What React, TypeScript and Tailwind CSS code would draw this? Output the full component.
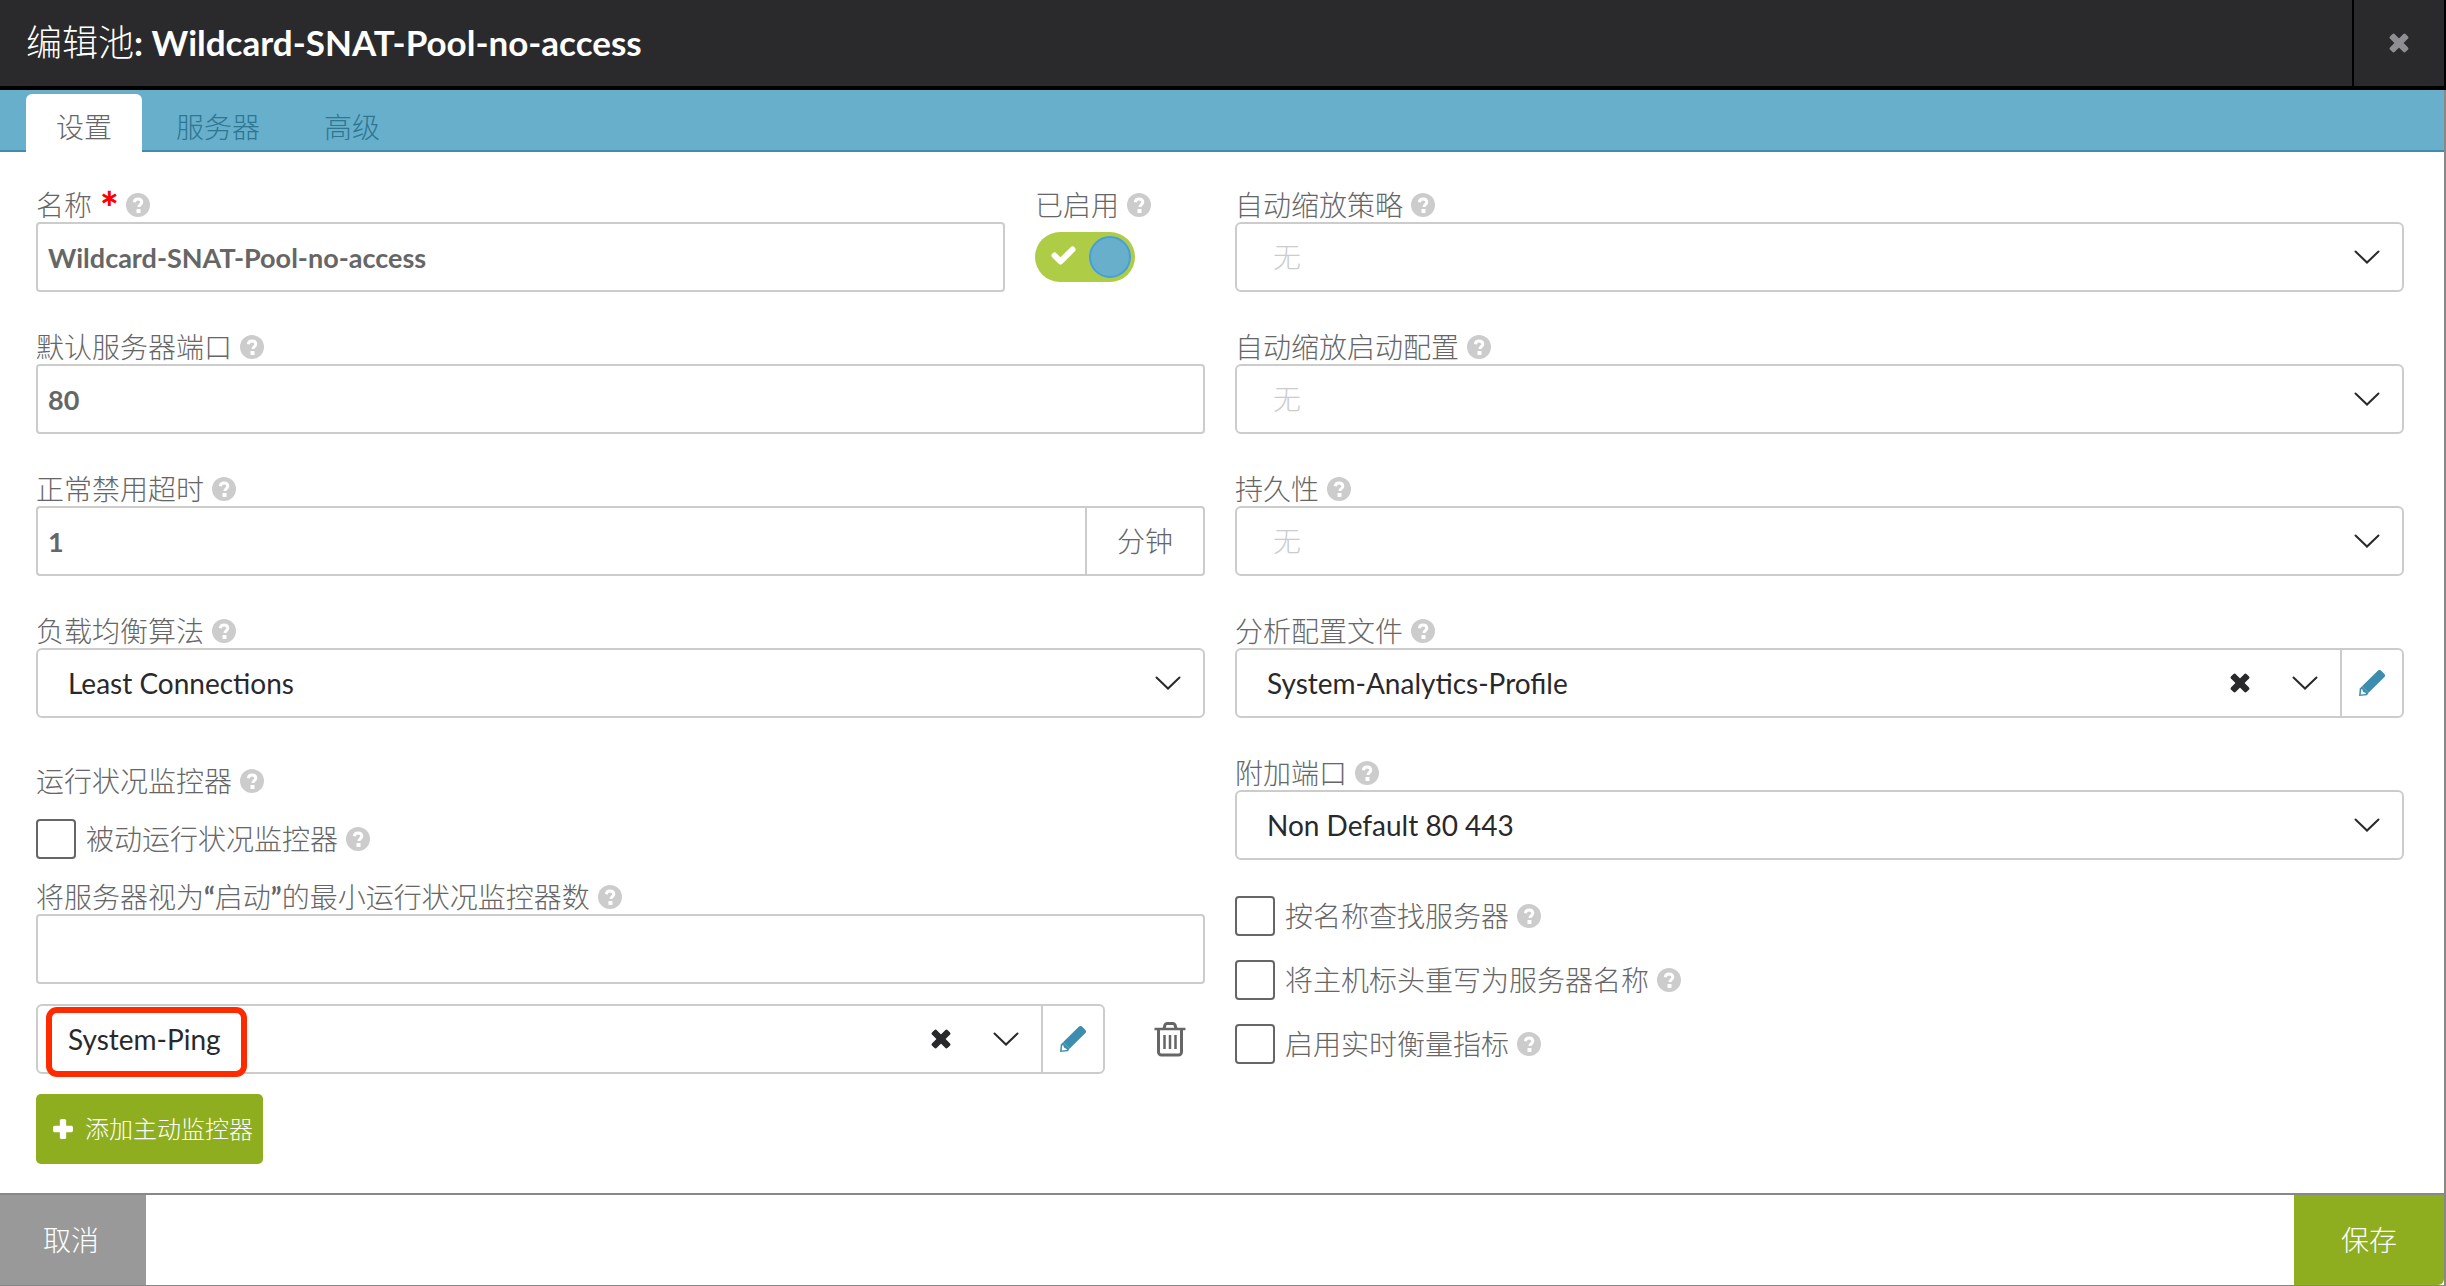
import type { ComponentProps, ReactNode } from 'react'
import clsx from 'clsx'

interface LabelProps {
  htmlFor?: string
  required?: boolean
  children: ReactNode
}

interface FieldProps extends LabelProps {
  control: ReactNode
  className?: string
}

interface DropdownProps {
  id: string
  value: string
  empty?: boolean
  editable?: boolean
  label?: string
  highlight?: boolean
}

const HelpIcon = () => (
  <svg viewBox="0 0 24 24" className="size-6 shrink-0" aria-hidden="true">
    <circle cx="12" cy="12" r="12" fill="#ccc" />
    <path
      d="M8.3 9.2C8.6 7 10 6 12 6c2.200 0 3.800 1.300 3.800 3.200 0 2.300-2.900 2.500-2.900 4.800"
      fill="none"
      stroke="#fff"
      strokeWidth="3"
    />
    <rect x="10.500" y="16" width="4" height="4" rx="0.500" fill="#fff" />
  </svg>
)

const ChevronIcon = () => (
  <svg
    viewBox="0 0 26 14"
    className="w-[26px] h-3.5 shrink-0"
    fill="none"
    stroke="#29292b"
    strokeWidth="2"
    aria-hidden="true"
  >
    <path d="M1.500 1.500 13 12.500 24.500 1.500" strokeLinecap="round" />
  </svg>
)

const CrossIcon = ({ className }: { className?: string }) => (
  <svg
    viewBox="0 0 20 20"
    className={clsx('size-5 shrink-0', className)}
    fill="currentColor"
    aria-hidden="true"
  >
    <g transform="rotate(45 10 10)">
      <rect x="-1" y="6.700" width="22" height="6.600" rx="1.800" />
      <rect x="6.700" y="-1" width="6.600" height="22" rx="1.800" />
    </g>
  </svg>
)

const PencilIcon = () => (
  <svg viewBox="0 0 26 26" className="size-[26px]" aria-hidden="true">
    <path
      d="M18.800.8a2.400 2.400 0 0 1 3.400 0l3 3a2.400 2.400 0 0 1 0 3.400L9.500 22.700 3 16.300z"
      fill="#3d8eae"
    />
    <path d="M3 16.300 9.500 22.700 8 25.200 0 26l.8-7.500z" fill="#3d8eae" />
    <path d="m3 18.700 1.200 3 3 1.500-1 .8-4.500.5.500-4.800z" fill="#fff" />
  </svg>
)

const TrashIcon = () => (
  <svg
    viewBox="0 0 32 36"
    className="w-8 h-9"
    fill="none"
    stroke="#666"
    strokeWidth="3"
    aria-hidden="true"
  >
    <path d="M.5 8h31" strokeWidth="2.500" />
    <path d="M4.500 8v23a3 3 0 0 0 3 3h17a3 3 0 0 0 3-3V8M10 7.500l1-3.500a2 2 0 0 1 2-1.500h6a2 2 0 0 1 2 1.500l1 3.500" />
    <path d="M10.500 14v14M16 14v14M21.500 14v14" strokeWidth="2.500" />
  </svg>
)

const Label = ({ htmlFor, required, children }: LabelProps) => (
  <div className="flex items-center gap-2 h-[34px]">
    <label htmlFor={htmlFor} className="flex items-center gap-2">
      {children}
      {required && (
        <span className="w-[18px] text-[44px] leading-[34px] h-[30px] font-black text-[#f00]">
          *
        </span>
      )}
    </label>
    <HelpIcon />
  </div>
)

const Field = ({ control, className, ...label }: FieldProps) => (
  <div className={className}>
    <Label {...label} />
    {control}
  </div>
)

const TextInput = ({ className, ...props }: ComponentProps<'input'>) => (
  <input
    type="text"
    className={clsx(
      'block w-full h-[70px] px-2.5 border-2 border-[#ccc] rounded-[4px] bg-white text-[27px] font-bold text-[#666]',
      className,
    )}
    {...props}
  />
)

const Dropdown = ({
  id,
  value,
  empty,
  editable,
  label,
  highlight,
}: DropdownProps) => (
  <div className="relative flex grow h-[70px] border-2 border-[#ccc] rounded-[6px] bg-white">
    <div className="relative flex grow items-center">
      <select
        id={id}
        aria-label={label}
        defaultValue={value}
        className={clsx(
          'appearance-none w-full h-full bg-transparent text-[28px]',
          empty ? 'pl-9 text-[#ccc]' : 'pl-[30px] font-normal text-[#29292b]',
        )}
      >
        <option>{value}</option>
      </select>
      <div className="absolute inset-y-0 right-[22px] flex items-center gap-[42px] pointer-events-none">
        {editable && (
          <button
            type="button"
            aria-label="清除"
            className="text-[#29292b] pointer-events-auto"
          >
            <CrossIcon />
          </button>
        )}
        <ChevronIcon />
      </div>
    </div>
    {editable && (
      <button
        type="button"
        aria-label="编辑"
        className="grid place-items-center w-[62px] shrink-0 border-l-2 border-[#ccc]"
      >
        <PencilIcon />
      </button>
    )}
    {highlight && (
      <span className="absolute left-2 top-px w-[201px] h-[70px] border-[6px] border-[#ff2a00] rounded-[11px] pointer-events-none" />
    )}
  </div>
)

const Checkbox = ({ id, children }: { id: string; children: ReactNode }) => (
  <div className="flex items-center h-10">
    <input
      id={id}
      type="checkbox"
      className="appearance-none size-10 mr-2.5 border-2 border-[#666] rounded-[4px] bg-white"
    />
    <label htmlFor={id} className="mr-2">
      {children}
    </label>
    <HelpIcon />
  </div>
)

const Toggle = ({ id }: { id: string }) => (
  <div className="relative w-[100px] h-[50px] mt-2.5">
    <input
      id={id}
      type="checkbox"
      role="switch"
      defaultChecked
      className="appearance-none block size-full rounded-full bg-[#aecc46]"
    />
    <svg
      viewBox="0 0 26 20"
      className="absolute left-4 top-3.5 w-[26px] h-5 pointer-events-none"
      fill="none"
      stroke="#fff"
      strokeWidth="6"
      strokeLinecap="round"
      strokeLinejoin="round"
      aria-hidden="true"
    >
      <path d="M3.500 9.500 9.500 15.500 21.500 3.500" />
    </svg>
    <span className="absolute right-1 top-1 size-[42px] rounded-full border-2 border-[#449fde] bg-[#67afcb] pointer-events-none" />
  </div>
)

const tabs = ['设置', '服务器', '高级']

const App = () => {
  return (
    <form className="flex flex-col min-h-screen bg-white text-[28px] leading-[34px] font-light text-[#666] font-['Lato','Noto_Sans_CJK_SC',sans-serif]">
      <header className="flex h-[90px] bg-[#2a2a2c] border-b-4 border-r-2 border-black text-white">
        <h1 className="grow pl-[26px] text-4xl leading-[84px] font-light">
          编辑池
          <span className="text-[35px] font-bold">
            : Wildcard-SNAT-Pool-no-access
          </span>
        </h1>
        <button
          type="button"
          aria-label="关闭"
          className="grid place-items-center w-[92px] border-l-2 border-black text-[#8e8e93]"
        >
          <CrossIcon />
        </button>
      </header>

      <div className="flex flex-col grow border-r-2 border-b border-[#888]">
        <nav
          role="tablist"
          className="flex gap-1 h-[62px] pt-1 pl-[26px] bg-[#67afcb] shadow-[inset_0_-2px_#3d8eae]"
        >
          {tabs.map((tab, i) => (
            <button
              key={tab}
              type="button"
              role="tab"
              aria-selected={i === 0}
              className={clsx(
                'px-[30px] pt-2 rounded-t-[6px]',
                i === 0 ? 'bg-white text-[#666]' : 'text-[#2f7691]',
              )}
            >
              {tab}
            </button>
          ))}
        </nav>

        <main className="grid grid-cols-2 gap-[30px] grow content-start pt-9 pl-9 pr-10 pb-[29px]">
          <div>
            <div className="flex flex-col gap-[38px]">
              <div className="flex gap-[30px]">
                <Field
                  className="grow"
                  htmlFor="name"
                  required
                  control={
                    <TextInput
                      id="name"
                      defaultValue="Wildcard-SNAT-Pool-no-access"
                    />
                  }
                >
                  名称
                </Field>
                <Field
                  className="w-[170px]"
                  htmlFor="enabled"
                  control={<Toggle id="enabled" />}
                >
                  已启用
                </Field>
              </div>
              <Field
                htmlFor="port"
                control={<TextInput id="port" defaultValue="80" />}
              >
                默认服务器端口
              </Field>
              <Field
                htmlFor="timeout"
                control={
                  <div className="flex">
                    <TextInput
                      id="timeout"
                      defaultValue="1"
                      className="rounded-r-none border-r-0"
                    />
                    <span className="flex items-center justify-center w-[120px] shrink-0 h-[70px] border-2 border-[#ccc] rounded-r-[4px]">
                      分钟
                    </span>
                  </div>
                }
              >
                正常禁用超时
              </Field>
              <Field
                htmlFor="algorithm"
                control={<Dropdown id="algorithm" value="Least Connections" />}
              >
                负载均衡算法
              </Field>
            </div>

            <div className="mt-[46px]">
              <Label>运行状况监控器</Label>
              <div className="my-[21px]">
                <Checkbox id="passive">被动运行状况监控器</Checkbox>
              </div>
              <Field
                htmlFor="min-monitors"
                control={<TextInput id="min-monitors" />}
              >
                <span>
                  将服务器视为<span className="font-bold">“</span>启动
                  <span className="font-bold">”</span>的最小运行状况监控器数
                </span>
              </Field>
            </div>

            <div className="flex mt-5">
              <Dropdown
                id="monitor"
                label="运行状况监控器"
                value="System-Ping"
                editable
                highlight
              />
              <button
                type="button"
                aria-label="删除"
                className="grid place-items-center w-[100px] pl-[30px]"
              >
                <TrashIcon />
              </button>
            </div>

            <button
              type="button"
              className="flex items-center gap-3 h-[70px] mt-5 pl-[17px] pr-2.5 rounded-[5px] bg-[#8fae1f] text-2xl text-white"
            >
              <svg
                viewBox="0 0 19 19"
                className="size-5"
                fill="currentColor"
                aria-hidden="true"
              >
                <rect x="6.500" width="6" height="19" rx="1.500" />
                <rect y="6.500" width="19" height="6" rx="1.500" />
              </svg>
              添加主动监控器
            </button>
          </div>

          <div>
            <div className="flex flex-col gap-[38px]">
              <Field
                htmlFor="scale-policy"
                control={<Dropdown id="scale-policy" value="无" empty />}
              >
                自动缩放策略
              </Field>
              <Field
                htmlFor="launch-config"
                control={<Dropdown id="launch-config" value="无" empty />}
              >
                自动缩放启动配置
              </Field>
              <Field
                htmlFor="persistence"
                control={<Dropdown id="persistence" value="无" empty />}
              >
                持久性
              </Field>
              <Field
                htmlFor="analytics"
                control={
                  <Dropdown
                    id="analytics"
                    value="System-Analytics-Profile"
                    editable
                  />
                }
              >
                分析配置文件
              </Field>
              <Field
                htmlFor="extra-ports"
                control={<Dropdown id="extra-ports" value="Non Default 80 443" />}
              >
                附加端口
              </Field>
            </div>

            <div className="flex flex-col gap-6 mt-9">
              <Checkbox id="lookup">按名称查找服务器</Checkbox>
              <Checkbox id="rewrite">将主机标头重写为服务器名称</Checkbox>
              <Checkbox id="realtime">启用实时衡量指标</Checkbox>
            </div>
          </div>
        </main>

        <footer className="flex justify-between h-[92px] border-t-2 border-[#888] text-white">
          <button type="button" className="w-[146px] pr-1 bg-[#999]">
            取消
          </button>
          <button
            type="submit"
            className="w-[150px] bg-[#8fae1f] rounded-br-[6px]"
          >
            保存
          </button>
        </footer>
      </div>
    </form>
  )
}

export default App
